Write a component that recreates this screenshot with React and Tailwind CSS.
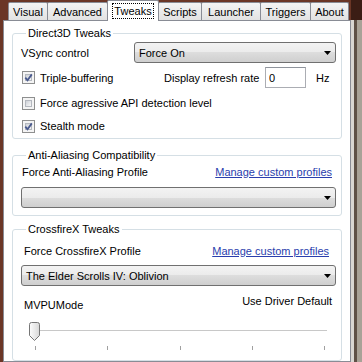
import React from "react";

const tabs = [
  { label: "Visual", w: "w-[40px]" },
  { label: "Advanced", w: "w-[61px]" },
  { label: "Tweaks", w: "w-[52px]", active: true },
  { label: "Scripts", w: "w-[44px]" },
  { label: "Launcher", w: "w-[60px]" },
  { label: "Triggers", w: "w-[51px]" },
  { label: "About", w: "w-[39px]" },
];

const Checkbox = ({ checked }) => (
  <span className="relative ml-px w-[13px] h-[13px] shrink-0 border border-[#8e8f8f] bg-[#f4f4f4] p-[2px] flex">
    <span className="flex-1 border border-[#b4b8bf] bg-[linear-gradient(135deg,#cdd1d7,#f8f8f8)]" />
    {checked && (
      <svg className="absolute -left-px -top-px" width="13" height="13" viewBox="0 0 13 13">
        <path d="M3.3 6.6 L5.5 9.2 L9.8 3.4" fill="none" stroke="#4a5a8e" strokeWidth="1.8" />
      </svg>
    )}
  </span>
);

const Combo = ({ value, className }) => (
  <div
    className={`h-[21px] flex items-center justify-between rounded-[3px] border border-[#707070] bg-[linear-gradient(to_bottom,#f3f3f3_0%,#ebebeb_50%,#dddddd_50%,#cfcfcf_100%)] pr-[4px] ${className}`}
  >
    <span className="pl-[4px]">{value}</span>
    <svg width="7" height="4" viewBox="0 0 7 4">
      <polygon points="0,0 7,0 3.5,4" fill="#000" />
    </svg>
  </div>
);

const Group = ({ title, className, children }) => (
  <fieldset className={`border border-[#d5dfe5] rounded-[3px] pl-[8px] pr-[5px] ${className}`}>
    <legend className="ml-[5px] px-[2px] leading-[14px]">{title}</legend>
    {children}
  </fieldset>
);

const Link = ({ children }) => (
  <span className="text-[#2a3ead] underline">{children}</span>
);

export default function App() {
  return (
    <div className="w-[362px] h-[362px] overflow-hidden flex bg-[#6b3626] font-['Liberation_Sans',Arial,sans-serif] text-[11px] leading-[14px] text-black">
      <div className="w-[351px] flex flex-col">
        {/* tabs */}
        <div className="h-[20px] flex items-start pl-[8px]">
          {tabs.map((t, i) =>
            t.active ? (
              <div
                key={t.label}
                className={`relative z-10 -ml-px h-[21px] ${t.w} border border-b-0 border-[#898c95] rounded-t-[2px] bg-white flex justify-center pt-[2px]`}
              >
                <span className="h-[16px] px-px border border-dotted border-black leading-[14px]">
                  {t.label}
                </span>
              </div>
            ) : (
              <div
                key={t.label}
                className={`${i === 0 ? "" : "-ml-px"} mt-[2px] h-[18px] ${t.w} border border-b-0 border-[#898c95] rounded-t-[2px] bg-[linear-gradient(to_bottom,#f4f4f4,#e2e2e2)] flex items-center justify-center pt-px`}
              >
                {t.label}
              </div>
            )
          )}
        </div>

        {/* page */}
        <div className="ml-[3px] w-[348px] flex-1 border border-[#898c95] bg-white px-[8px] pt-[5px] flex flex-col">
          <Group title="Direct3D Tweaks" className="pb-[4px]">
            <div className="mt-[2px] h-[21px] flex items-center">
              <span className="w-[113px]">VSync control</span>
              <Combo value="Force On" className="w-[202px]" />
            </div>
            <div className="mt-[4px] h-[21px] flex items-center">
              <div className="w-[143px] flex items-center">
                <Checkbox checked />
                <span className="ml-[5px]">Triple-buffering</span>
              </div>
              <span className="w-[101px]">Display refresh rate</span>
              <input
                readOnly
                value="0"
                className="w-[41px] h-[21px] border border-[#abadb3] border-t-[#8f949c] pl-[3px] text-[11px] outline-none"
              />
              <span className="ml-[10px]">Hz</span>
            </div>
            <div className="mt-[7px] h-[16px] flex items-center">
              <Checkbox />
              <span className="ml-[5px]">Force agressive API detection level</span>
            </div>
            <div className="mt-[7px] h-[16px] flex items-center">
              <Checkbox checked />
              <span className="ml-[5px]">Stealth mode</span>
            </div>
          </Group>

          <Group title="Anti-Aliasing Compatibility" className="mt-[9px] pb-[7px]">
            <div className="mt-[3px] flex justify-between pl-px pr-[4px]">
              <span>Force Anti-Aliasing Profile</span>
              <Link>Manage custom profiles</Link>
            </div>
            <Combo value="" className="mt-[8px] w-full" />
          </Group>

          <Group title="CrossfireX Tweaks" className="mt-[6px] flex-1">
            <div className="mt-[8px] flex justify-between pl-[3px] pr-[7px]">
              <span>Force CrossfireX Profile</span>
              <Link>Manage custom profiles</Link>
            </div>
            <Combo value="The Elder Scrolls IV: Oblivion" className="mt-[7px] w-full" />
            <div className="mt-[8px] flex justify-between items-start pl-[3px] pr-[4px]">
              <span className="mt-[4px]">MVPUMode</span>
              <span>Use Driver Default</span>
            </div>
            <div className="relative mt-[10px] ml-[8px] w-[298px] h-[19px]">
              <div className="absolute left-[5px] right-0 top-[8px] h-[2px] bg-[#c8c8c8] border-b border-white" />
              <svg className="absolute left-0 top-0" width="11" height="19" viewBox="0 0 11 19">
                <defs>
                  <linearGradient id="thumb" x1="0" y1="0" x2="1" y2="0">
                    <stop offset="0" stopColor="#fdfdfd" />
                    <stop offset="1" stopColor="#d8d8d8" />
                  </linearGradient>
                </defs>
                <path
                  d="M0.5 2.5 Q0.5 0.5 2.5 0.5 H8.5 Q10.5 0.5 10.5 2.5 V13.5 L5.5 18.5 L0.5 13.5 Z"
                  fill="url(#thumb)"
                  stroke="#767676"
                />
              </svg>
            </div>
            <div className="mt-[5px] ml-[14px] w-[290px] flex justify-between">
              {[0, 1, 2, 3, 4].map((i) => (
                <span key={i} className="w-px h-[4px] bg-[#a0a0a0]" />
              ))}
            </div>
          </Group>
        </div>
      </div>

      {/* window edge on the right */}
      <div className="flex-1 flex flex-col">
        <div className="h-[20px] bg-[#3b1d15]" />
        <div className="flex-1 flex">
          <div className="w-[3px] bg-[#d9d7d3]" />
          <div className="w-[3px] bg-[#5e5147]" />
          <div className="flex-1 bg-[#a8a297]" />
        </div>
      </div>
    </div>
  );
}
